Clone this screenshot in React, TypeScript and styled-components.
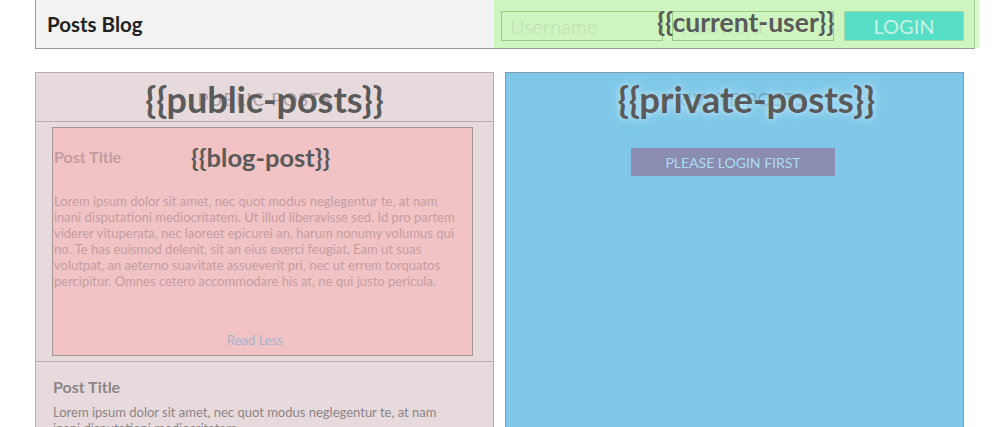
import React from "react";
import styled, { createGlobalStyle } from "styled-components";

const GlobalStyle = createGlobalStyle`
  body {
    margin: 0;
    background: #fff;
    font-family: Lato, "Open Sans", sans-serif;
    overflow: hidden;
  }
`;

const lorem =
  "Lorem ipsum dolor sit amet, nec quot modus neglegentur te, at nam inani disputationi mediocritatem. Ut illud liberavisse sed. Id pro partem viderer vituperata, nec laoreet epicurei an, harum nonumy volumus qui no. Te has euismod delenit, sit an eius exerci feugiat. Eam ut suas volutpat, an aeterno suavitate assueverit pri, nec ut errem torquatos percipitur. Omnes cetero accommodare his at, ne qui justo pericula.";

// collapsed posts only show the first sentence
const excerpt = lorem.slice(0, lorem.indexOf(".") + 1);

export default function App() {
  return (
    <Page>
      <GlobalStyle />
      <Header>
        <Brand>Posts Blog</Brand>
        <CurrentUser>
          <Field placeholder="Username" />
          <Field placeholder="Password" type="password" />
          <LoginButton>LOGIN</LoginButton>
          <ComponentLabel $size={26.5} $top={6} $left={163}>
            {"{{current-user}}"}
          </ComponentLabel>
        </CurrentUser>
      </Header>

      <Columns>
        <Panel $bg="#e7dadc" $border="#b9abaf">
          <PanelHead $line="#b9abaf">
            <PanelTitle $color="#ab9fa3">PUBLIC POSTS</PanelTitle>
            <ComponentLabel $size={36} $top={4} $center>
              {"{{public-posts}}"}
            </ComponentLabel>
          </PanelHead>

          <PostRow $line="#b9abaf" $open>
            <BlogPost>
              <PostTitle $color="#c49ca0">Post Title</PostTitle>
              <PostBody $color="#c49ea2">{lorem}</PostBody>
              <ReadLess>Read Less</ReadLess>
              <ComponentLabel $size={25.5} $top={14} $left={138}>
                {"{{blog-post}}"}
              </ComponentLabel>
            </BlogPost>
          </PostRow>

          <PostRow $line="#b9abaf">
            <PostTitle $color="#8c8587">Post Title</PostTitle>
            <PostBody $color="#8c8587" $tight>{excerpt}</PostBody>
          </PostRow>
        </Panel>

        <Panel $bg="#7fc8e9" $border="#7f9fb1">
          <PanelHead>
            <PanelTitle $color="#5e9cbb">PRIVATE POSTS</PanelTitle>
            <ComponentLabel $size={36.5} $top={4} $center $glow $shift={12}>
              {"{{private-posts}}"}
            </ComponentLabel>
          </PanelHead>
          <LoginFirst>PLEASE LOGIN FIRST</LoginFirst>
        </Panel>
      </Columns>
    </Page>
  );
}

const Page = styled.div`
  padding: 0 35px;
  width: 940px;
`;

const Header = styled.header`
  height: 48px;
  border: 1px solid #9a9a9a;
  border-top: none;
  background: #f2f2f2;
  display: flex;
  align-items: stretch;
  justify-content: space-between;
`;

const Brand = styled.h1`
  margin: 0;
  padding-left: 11px;
  align-self: center;
  font-size: 20.5px;
  font-weight: 700;
  color: #222;
`;

const CurrentUser = styled.div`
  position: relative;
  margin-right: -5px;
  padding: 11px 15px 0 7px;
  display: flex;
  align-items: flex-start;
  gap: 9px;
  background: rgba(176, 246, 150, 0.55);
`;

const Field = styled.input`
  box-sizing: border-box;
  width: 162px;
  height: 30px;
  padding: 0 8px;
  border: 1px solid rgba(110, 175, 90, 0.55);
  background: transparent;
  font-family: Lato, sans-serif;
  font-size: 20px;
  font-weight: 300;
  outline: none;

  &::placeholder {
    color: #bddfae;
  }
`;

const LoginButton = styled.button`
  box-sizing: border-box;
  width: 120px;
  height: 30px;
  margin-left: 1px;
  border: 1px solid #9fd9a8;
  background: #56dec7;
  color: #c6f5e2;
  font-family: Lato, sans-serif;
  font-size: 20px;
  font-weight: 400;
  padding: 0;
`;

const ComponentLabel = styled.div<{
  $size: number;
  $top: number;
  $left?: number;
  $center?: boolean;
  $glow?: boolean;
  $shift?: number;
}>`
  position: absolute;
  top: ${(p) => p.$top}px;
  ${(p) =>
    p.$center
      ? `left: 0; right: 0; text-align: center; transform: translateX(${p.$shift || 0}px);`
      : `left: ${p.$left}px;`}
  font-size: ${(p) => p.$size}px;
  font-weight: 700;
  color: #5a5a5a;
  white-space: nowrap;
  pointer-events: none;
  ${(p) => p.$glow && "text-shadow: 0 0 6px rgba(200, 235, 250, 0.9), 0 0 12px rgba(200, 235, 250, 0.6);"}
`;

const Columns = styled.main`
  margin-top: 23px;
  display: flex;
  gap: 11px;
  align-items: flex-start;
`;

const Panel = styled.section<{ $bg: string; $border: string }>`
  box-sizing: border-box;
  width: 459px;
  height: 380px;
  background: ${(p) => p.$bg};
  border: 1px solid ${(p) => p.$border};
  border-bottom: none;
  overflow: hidden;
`;

const PanelHead = styled.div<{ $line?: string }>`
  position: relative;
  height: 48px;
  display: flex;
  align-items: center;
  justify-content: center;
  border-bottom: 1px solid ${(p) => p.$line || "transparent"};
`;

const PanelTitle = styled.span<{ $color: string }>`
  font-size: 18px;
  letter-spacing: 1px;
  color: ${(p) => p.$color};
  padding-top: 4px;
`;

const PostRow = styled.div<{ $line: string; $open?: boolean }>`
  padding: ${(p) => (p.$open ? "5px 20px 5px 16px" : "15px 38px 0 17px")};
  border-bottom: ${(p) => (p.$open ? `1px solid ${p.$line}` : "none")};
`;

const BlogPost = styled.article`
  position: relative;
  box-sizing: border-box;
  height: 229px;
  border: 1px solid #a39496;
  background: #f1c3c5;
  padding: 19px 16px 0 1px;
  display: flex;
  flex-direction: column;
`;

const PostTitle = styled.h2<{ $color: string }>`
  margin: 0;
  font-size: 16px;
  font-weight: 700;
  color: ${(p) => p.$color};
`;

const PostBody = styled.p<{ $color: string; $tight?: boolean }>`
  margin: ${(p) => (p.$tight ? "8px 0 0" : "27px 0 0")};
  font-size: 13px;
  line-height: 16px;
  color: ${(p) => p.$color};
`;

const ReadLess = styled.a`
  margin-top: auto;
  margin-bottom: 7px;
  text-align: center;
  font-size: 13px;
  color: #a4b1cd;
`;

const LoginFirst = styled.button`
  display: block;
  box-sizing: border-box;
  width: 204px;
  height: 28px;
  margin: 26px 0 0 125px;
  border: none;
  background: #8a8db0;
  color: #acdcf2;
  font-family: Lato, sans-serif;
  font-size: 14px;
  padding: 0;
`;
